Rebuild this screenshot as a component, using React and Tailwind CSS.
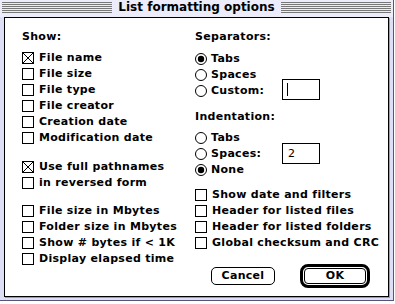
import React from 'react';

const showTop = ['File name', 'File size', 'File type', 'File creator', 'Creation date', 'Modification date'];
const showMid = ['Use full pathnames', 'in reversed form'];
const showBottom = ['File size in Mbytes', 'Folder size in Mbytes', 'Show # bytes if < 1K', 'Display elapsed time'];
const extras = ['Show date and filters', 'Header for listed files', 'Header for listed folders', 'Global checksum and CRC'];

function Checkbox({ label, checked }) {
  return (
    <div className="flex h-4 items-center gap-[5px]">
      <svg width="12" height="12" viewBox="0 0 12 12" className="shrink-0">
        <rect x="0.5" y="0.5" width="11" height="11" fill="white" stroke="black" />
        {checked && <path d="M1 1L11 11M11 1L1 11" stroke="black" strokeWidth="1" />}
      </svg>
      <span>{label}</span>
    </div>
  );
}

function Radio({ label, checked, children }) {
  return (
    <div className="flex h-4 items-center gap-[4px]">
      <svg width="12" height="12" viewBox="0 0 12 12" className="shrink-0">
        <circle cx="6" cy="6" r="5.5" fill="white" stroke="black" />
        {checked && <circle cx="6" cy="6" r="3.2" fill="black" />}
      </svg>
      <span className={children ? 'w-[67px]' : ''}>{label}</span>
      {children}
    </div>
  );
}

function Stripes() {
  return (
    <div className="flex flex-1 flex-col gap-px pt-[2px]">
      {[0, 1, 2, 3, 4, 5].map((i) => (
        <div key={i} className="h-px bg-[#777777]" />
      ))}
    </div>
  );
}

export default function App() {
  return (
    <div className="h-[304px] w-[395px] overflow-hidden bg-white text-[11px] font-bold leading-4 tracking-[0.3px] text-black [font-family:'DejaVu_Sans',sans-serif]">
      <div className="flex h-[301px] w-[394px] flex-col border-r border-b border-[#555577] bg-[#dedef6]">
        <div className="flex h-[17px] items-start gap-[4px] bg-[#ececfa] px-[2px]">
          <Stripes />
          <span className="px-[2px] text-[12px] leading-[15px] tracking-normal">List formatting options</span>
          <Stripes />
        </div>

        <div className="mx-[4px] flex h-[280px] border border-black bg-white pl-[17px] pt-[11px] shadow-[1px_1px_0_#9999cc]">
          <div className="w-[173px]">
            <div className="mb-[5px] h-4">Show:</div>
            {showTop.map((l, i) => (
              <Checkbox key={l} label={l} checked={i === 0} />
            ))}
            <div className="mt-[13px]">
              {showMid.map((l, i) => (
                <Checkbox key={l} label={l} checked={i === 0} />
              ))}
            </div>
            <div className="mt-[12px]">
              {showBottom.map((l) => (
                <Checkbox key={l} label={l} />
              ))}
            </div>
          </div>

          <div className="flex-1">
            <div className="mb-[6px] h-4">Separators:</div>
            <Radio label="Tabs" checked />
            <Radio label="Spaces" />
            <Radio label="Custom:">
              <div className="mt-[-4px] flex h-[21px] w-[38px] items-center border border-black pl-[4px]">
                <div className="h-[13px] w-px bg-black" />
              </div>
            </Radio>

            <div className="mb-[5px] mt-[10px] h-4">Indentation:</div>
            <Radio label="Tabs" />
            <Radio label="Spaces:">
              <div className="mt-[-1px] flex h-[21px] w-[38px] items-center border border-black pl-[5px] font-normal">
                2
              </div>
            </Radio>
            <Radio label="None" checked />

            <div className="mt-[9px]">
              {extras.map((l) => (
                <Checkbox key={l} label={l} />
              ))}
            </div>

            <div className="mt-[13px] flex items-center">
              <button className="ml-[16px] h-[18px] w-[64px] rounded-[5px] border border-black bg-white leading-4">
                Cancel
              </button>
              <div className="ml-[25px] rounded-[8px] border-[3px] border-black p-px">
                <button className="h-[16px] w-[62px] rounded-[4px] border border-black bg-white leading-[14px]">
                  OK
                </button>
              </div>
            </div>
          </div>
        </div>
      </div>
    </div>
  );
}
